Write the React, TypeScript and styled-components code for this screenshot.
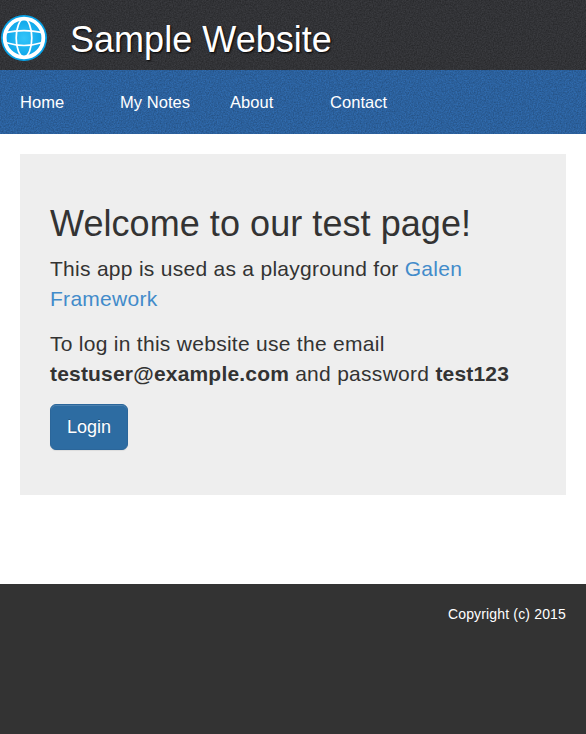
import React from "react";
import styled, { createGlobalStyle } from "styled-components";

const grain = (alpha: number) =>
  `url("data:image/svg+xml,${encodeURIComponent(
    `<svg xmlns='http://www.w3.org/2000/svg' width='200' height='200'><filter id='n' x='0' y='0' width='100%' height='100%'><feTurbulence type='fractalNoise' baseFrequency='0.75' numOctaves='2' stitchTiles='stitch'/><feColorMatrix values='0 0 0 0 0 0 0 0 0 0 0 0 0 0 0 ${alpha} 0 0 0 ${-alpha * 0.25}'/></filter><rect width='200' height='200' filter='url(#n)'/></svg>`
  )}")`;

const GlobalStyle = createGlobalStyle`
  * { box-sizing: border-box; }
  body {
    margin: 0;
    background: #fff;
    color: #333;
    font: 14px/20px "Liberation Sans", Arial, sans-serif;
  }
`;

const Page = styled.div`
  display: flex;
  flex-direction: column;
  min-height: 734px;
`;

const Header = styled.header`
  display: flex;
  align-items: center;
  height: 70px;
  background: ${grain(0.55)} #3a3b3f;
`;

const Logo = styled.svg`
  display: block;
  width: 48px;
  height: 48px;
  margin-top: 6px;
`;

const SiteName = styled.h1`
  margin: 9px 0 0 22px;
  color: #fff;
  font-size: 36px;
  font-weight: 400;
  line-height: 40px;
  letter-spacing: 0.03px;
  white-space: nowrap;
  text-shadow: 1px 1px 2px #000;
`;

const Nav = styled.nav`
  display: flex;
  height: 64px;
  padding-left: 20px;
  background: ${grain(0.4)} #306bae;
`;

const NavLink = styled.a<{ $width: number }>`
  width: ${(p) => p.$width}px;
  color: #fff;
  font-size: 16.5px;
  line-height: 64px;
  letter-spacing: 0.05px;
  text-decoration: none;
  white-space: nowrap;
`;

const Panel = styled.main`
  height: 341px;
  margin: 20px 20px 89px;
  padding: 50px 30px 0;
  background: #eee;
`;

const Title = styled.h1`
  margin: 0 0 10px;
  font-size: 36px;
  font-weight: 400;
  line-height: 40px;
  letter-spacing: 0.06px;
  white-space: nowrap;
`;

const Text = styled.p`
  margin: 0 0 15px;
  font-size: 21px;
  line-height: 30px;
  letter-spacing: 0.28px;
`;

const Strong = styled.b`
  letter-spacing: 0.19px;
`;

const TextLink = styled.a`
  color: #428bca;
  text-decoration: none;
`;

const LoginButton = styled.button`
  display: block;
  width: 78px;
  height: 46px;
  padding: 0;
  border: 1px solid #2b669a;
  border-radius: 6px;
  background: #2d6ca2;
  box-shadow: inset 0 1px 0 rgba(255, 255, 255, 0.15), 0 1px 1px rgba(0, 0, 0, 0.075);
  color: #fff;
  font: 18px/24px "Liberation Sans", Arial, sans-serif;
  text-shadow: 0 -1px 0 rgba(0, 0, 0, 0.2);
`;

const Footer = styled.footer`
  flex: 1;
  padding: 20px;
  background: #333;
  color: #fff;
  letter-spacing: 0.16px;
  text-align: right;
`;

const links = [
  { label: "Home", width: 100 },
  { label: "My Notes", width: 110 },
  { label: "About", width: 100 },
  { label: "Contact", width: 100 },
];

const GlobeLogo = () => (
  <Logo viewBox="0 0 48 48" fill="none" aria-label="Globe">
    <defs>
      <radialGradient id="globe">
        <stop offset="0" stopColor="#35c5fa" />
        <stop offset="1" stopColor="#05a0e6" />
      </radialGradient>
    </defs>
    <circle cx="24" cy="24" r="23" fill="url(#globe)" />
    <circle cx="24" cy="24" r="19.3" stroke="#fff" strokeWidth="3.8" />
    <g stroke="#fff" strokeWidth="1.7">
      <ellipse cx="24" cy="24" rx="7.8" ry="19" />
      <path d="M6.5 18.4Q24 15 41.5 18.4M6.5 28.8Q24 34.2 41.5 28.8" />
    </g>
  </Logo>
);

export default function App() {
  return (
    <>
      <GlobalStyle />
      <Page>
        <Header>
          <GlobeLogo />
          <SiteName>Sample Website</SiteName>
        </Header>
        <Nav>
          {links.map((l) => (
            <NavLink key={l.label} $width={l.width}>{l.label}</NavLink>
          ))}
        </Nav>
        <Panel>
          <Title>Welcome to our test page!</Title>
          <Text>
            This app is used as a playground for <TextLink>Galen Framework</TextLink>
          </Text>
          <Text>
            To log in this website use the email <Strong>testuser@example.com</Strong> and password <Strong>test123</Strong>
          </Text>
          <LoginButton>Login</LoginButton>
        </Panel>
        <Footer>Copyright (c) 2015</Footer>
      </Page>
    </>
  );
}
